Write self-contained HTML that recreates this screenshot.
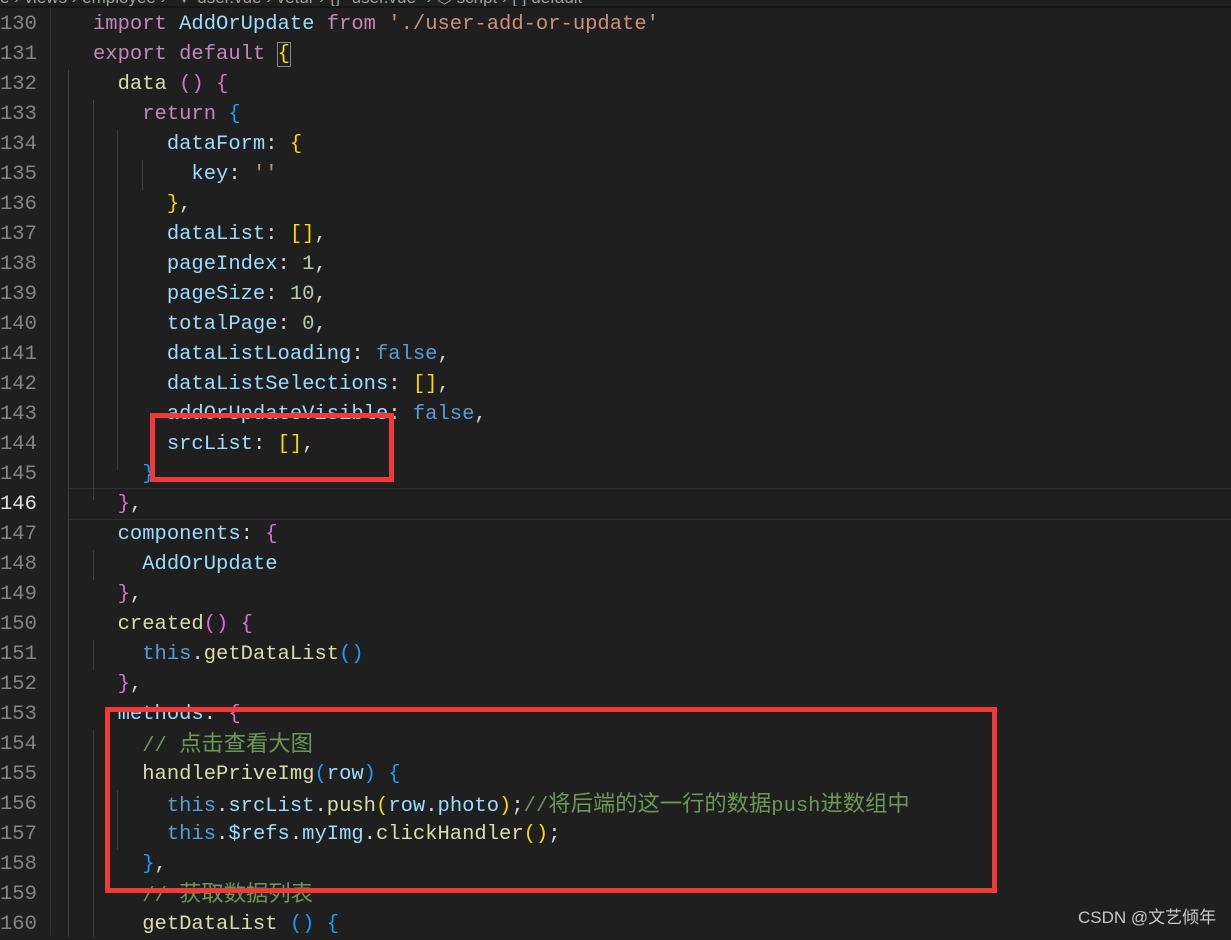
<!DOCTYPE html>
<html><head><meta charset="utf-8"><style>
body{margin:0;width:1231px;height:935px;background:#1f1f1f;overflow:hidden;position:relative;font-family:"Liberation Mono","Noto Sans CJK SC",monospace;font-size:20.5px}
.ln{position:absolute;left:0;width:34px;text-align:right;color:#858585;height:30px;line-height:30px;margin-top:2px}
.c{position:absolute;left:93px;white-space:pre;height:30px;line-height:30px;color:#d4d4d4;margin-top:2px}
.g{position:absolute;width:1px;background:#404040}
.k{color:#c586c0}.v{color:#9cdcfe}.s{color:#ce9178}.n{color:#b5cea8}.b{color:#569cd6}.f{color:#dcdcaa}
.y{color:#ffd700}.p{color:#da70d6}.bl{color:#179fff}.cm{color:#6a9955}
.z{font-size:22.3px}
.box{position:absolute;border:5px solid #f03a3a}
</style></head><body>
<div style="position:absolute;left:0;top:-10px;height:16px;width:1231px;white-space:pre;color:#a0a0a0;font-family:'Liberation Sans',sans-serif;font-size:17px;line-height:16px">e › views › employee ›  ▼ user.vue › vetur › {} "user.vue" › ⬡ script › [∙] default</div>
<div style="position:absolute;left:0;top:6px;width:1231px;height:2px;background:#151515"></div>
<div class="g" style="left:50px;top:8px;height:927px;background:#2e2e2e"></div>
<div style="position:absolute;left:68px;top:488px;width:1163px;height:30px;border-top:1px solid #303030;border-bottom:1px solid #303030"></div>
<div class="g" style="left:68px;top:70px;height:867px"></div>
<div class="g" style="left:93px;top:100px;height:400px"></div>
<div class="g" style="left:117px;top:130px;height:340px"></div>
<div class="g" style="left:142px;top:160px;height:30px"></div>
<div class="g" style="left:93px;top:550px;height:30px"></div>
<div class="g" style="left:93px;top:640px;height:30px"></div>
<div class="g" style="left:93px;top:730px;height:207px"></div>
<div class="g" style="left:117px;top:790px;height:60px"></div>

<div class="ln" style="top:8px">130</div><div class="c" style="top:8px"><span class="k">import</span> <span class="v">AddOrUpdate</span> <span class="k">from</span> <span class="s">'./user-add-or-update'</span></div>
<div class="ln" style="top:38px">131</div><div class="c" style="top:38px"><span class="k">export</span> <span class="k">default</span> <span class="y" style="outline:1px solid #888">{</span></div>
<div class="ln" style="top:68px">132</div><div class="c" style="top:68px">  <span class="f">data</span> <span class="p">()</span> <span class="p">{</span></div>
<div class="ln" style="top:98px">133</div><div class="c" style="top:98px">    <span class="k">return</span> <span class="bl">{</span></div>
<div class="ln" style="top:128px">134</div><div class="c" style="top:128px">      <span class="v">dataForm</span>: <span class="y">{</span></div>
<div class="ln" style="top:158px">135</div><div class="c" style="top:158px">        <span class="v">key</span>: <span class="s">''</span></div>
<div class="ln" style="top:188px">136</div><div class="c" style="top:188px">      <span class="y">}</span>,</div>
<div class="ln" style="top:218px">137</div><div class="c" style="top:218px">      <span class="v">dataList</span>: <span class="y">[]</span>,</div>
<div class="ln" style="top:248px">138</div><div class="c" style="top:248px">      <span class="v">pageIndex</span>: <span class="n">1</span>,</div>
<div class="ln" style="top:278px">139</div><div class="c" style="top:278px">      <span class="v">pageSize</span>: <span class="n">10</span>,</div>
<div class="ln" style="top:308px">140</div><div class="c" style="top:308px">      <span class="v">totalPage</span>: <span class="n">0</span>,</div>
<div class="ln" style="top:338px">141</div><div class="c" style="top:338px">      <span class="v">dataListLoading</span>: <span class="b">false</span>,</div>
<div class="ln" style="top:368px">142</div><div class="c" style="top:368px">      <span class="v">dataListSelections</span>: <span class="y">[]</span>,</div>
<div class="ln" style="top:398px">143</div><div class="c" style="top:398px">      <span class="v">addOrUpdateVisible</span>: <span class="b">false</span>,</div>
<div class="ln" style="top:428px">144</div><div class="c" style="top:428px">      <span class="v">srcList</span>: <span class="y">[]</span>,</div>
<div class="ln" style="top:458px">145</div><div class="c" style="top:458px">    <span class="bl">}</span></div>
<div class="ln" style="top:488px;color:#e0e0e0">146</div><div class="c" style="top:488px">  <span class="p">}</span>,</div>
<div class="ln" style="top:518px">147</div><div class="c" style="top:518px">  <span class="v">components</span>: <span class="p">{</span></div>
<div class="ln" style="top:548px">148</div><div class="c" style="top:548px">    <span class="v">AddOrUpdate</span></div>
<div class="ln" style="top:578px">149</div><div class="c" style="top:578px">  <span class="p">}</span>,</div>
<div class="ln" style="top:608px">150</div><div class="c" style="top:608px">  <span class="f">created</span><span class="p">()</span> <span class="p">{</span></div>
<div class="ln" style="top:638px">151</div><div class="c" style="top:638px">    <span class="b">this</span>.<span class="f">getDataList</span><span class="bl">()</span></div>
<div class="ln" style="top:668px">152</div><div class="c" style="top:668px">  <span class="p">}</span>,</div>
<div class="ln" style="top:698px">153</div><div class="c" style="top:698px">  <span class="v">methods</span>: <span class="p">{</span></div>
<div class="ln" style="top:728px">154</div><div class="c" style="top:728px">    <span class="cm">// <span class="z">点击查看大图</span></span></div>
<div class="ln" style="top:758px">155</div><div class="c" style="top:758px">    <span class="f">handlePriveImg</span><span class="bl">(</span><span class="v">row</span><span class="bl">)</span> <span class="bl">{</span></div>
<div class="ln" style="top:788px">156</div><div class="c" style="top:788px">      <span class="b">this</span>.<span class="v">srcList</span>.<span class="f">push</span><span class="y">(</span><span class="v">row</span>.<span class="v">photo</span><span class="y">)</span>;<span class="cm">//<span class="z">将后端的这一行的数据</span>push<span class="z">进数组中</span></span></div>
<div class="ln" style="top:818px">157</div><div class="c" style="top:818px">      <span class="b">this</span>.<span class="v">$refs</span>.<span class="v">myImg</span>.<span class="f">clickHandler</span><span class="y">()</span>;</div>
<div class="ln" style="top:848px">158</div><div class="c" style="top:848px">    <span class="bl">}</span>,</div>
<div class="ln" style="top:878px">159</div><div class="c" style="top:878px">    <span class="cm">// <span class="z">获取数据列表</span></span></div>
<div class="ln" style="top:908px">160</div><div class="c" style="top:908px">    <span class="f">getDataList</span> <span class="bl">()</span> <span class="bl">{</span></div>

<div class="box" style="left:150px;top:413px;width:234px;height:59px"></div>
<div class="box" style="left:105px;top:707px;width:882px;height:176px"></div>
<div style="position:absolute;left:1078px;top:903px;font-family:'Liberation Sans','Noto Sans CJK SC',sans-serif;font-size:17px;color:#c8c8c8">CSDN @文艺倾年</div>
</body></html>
